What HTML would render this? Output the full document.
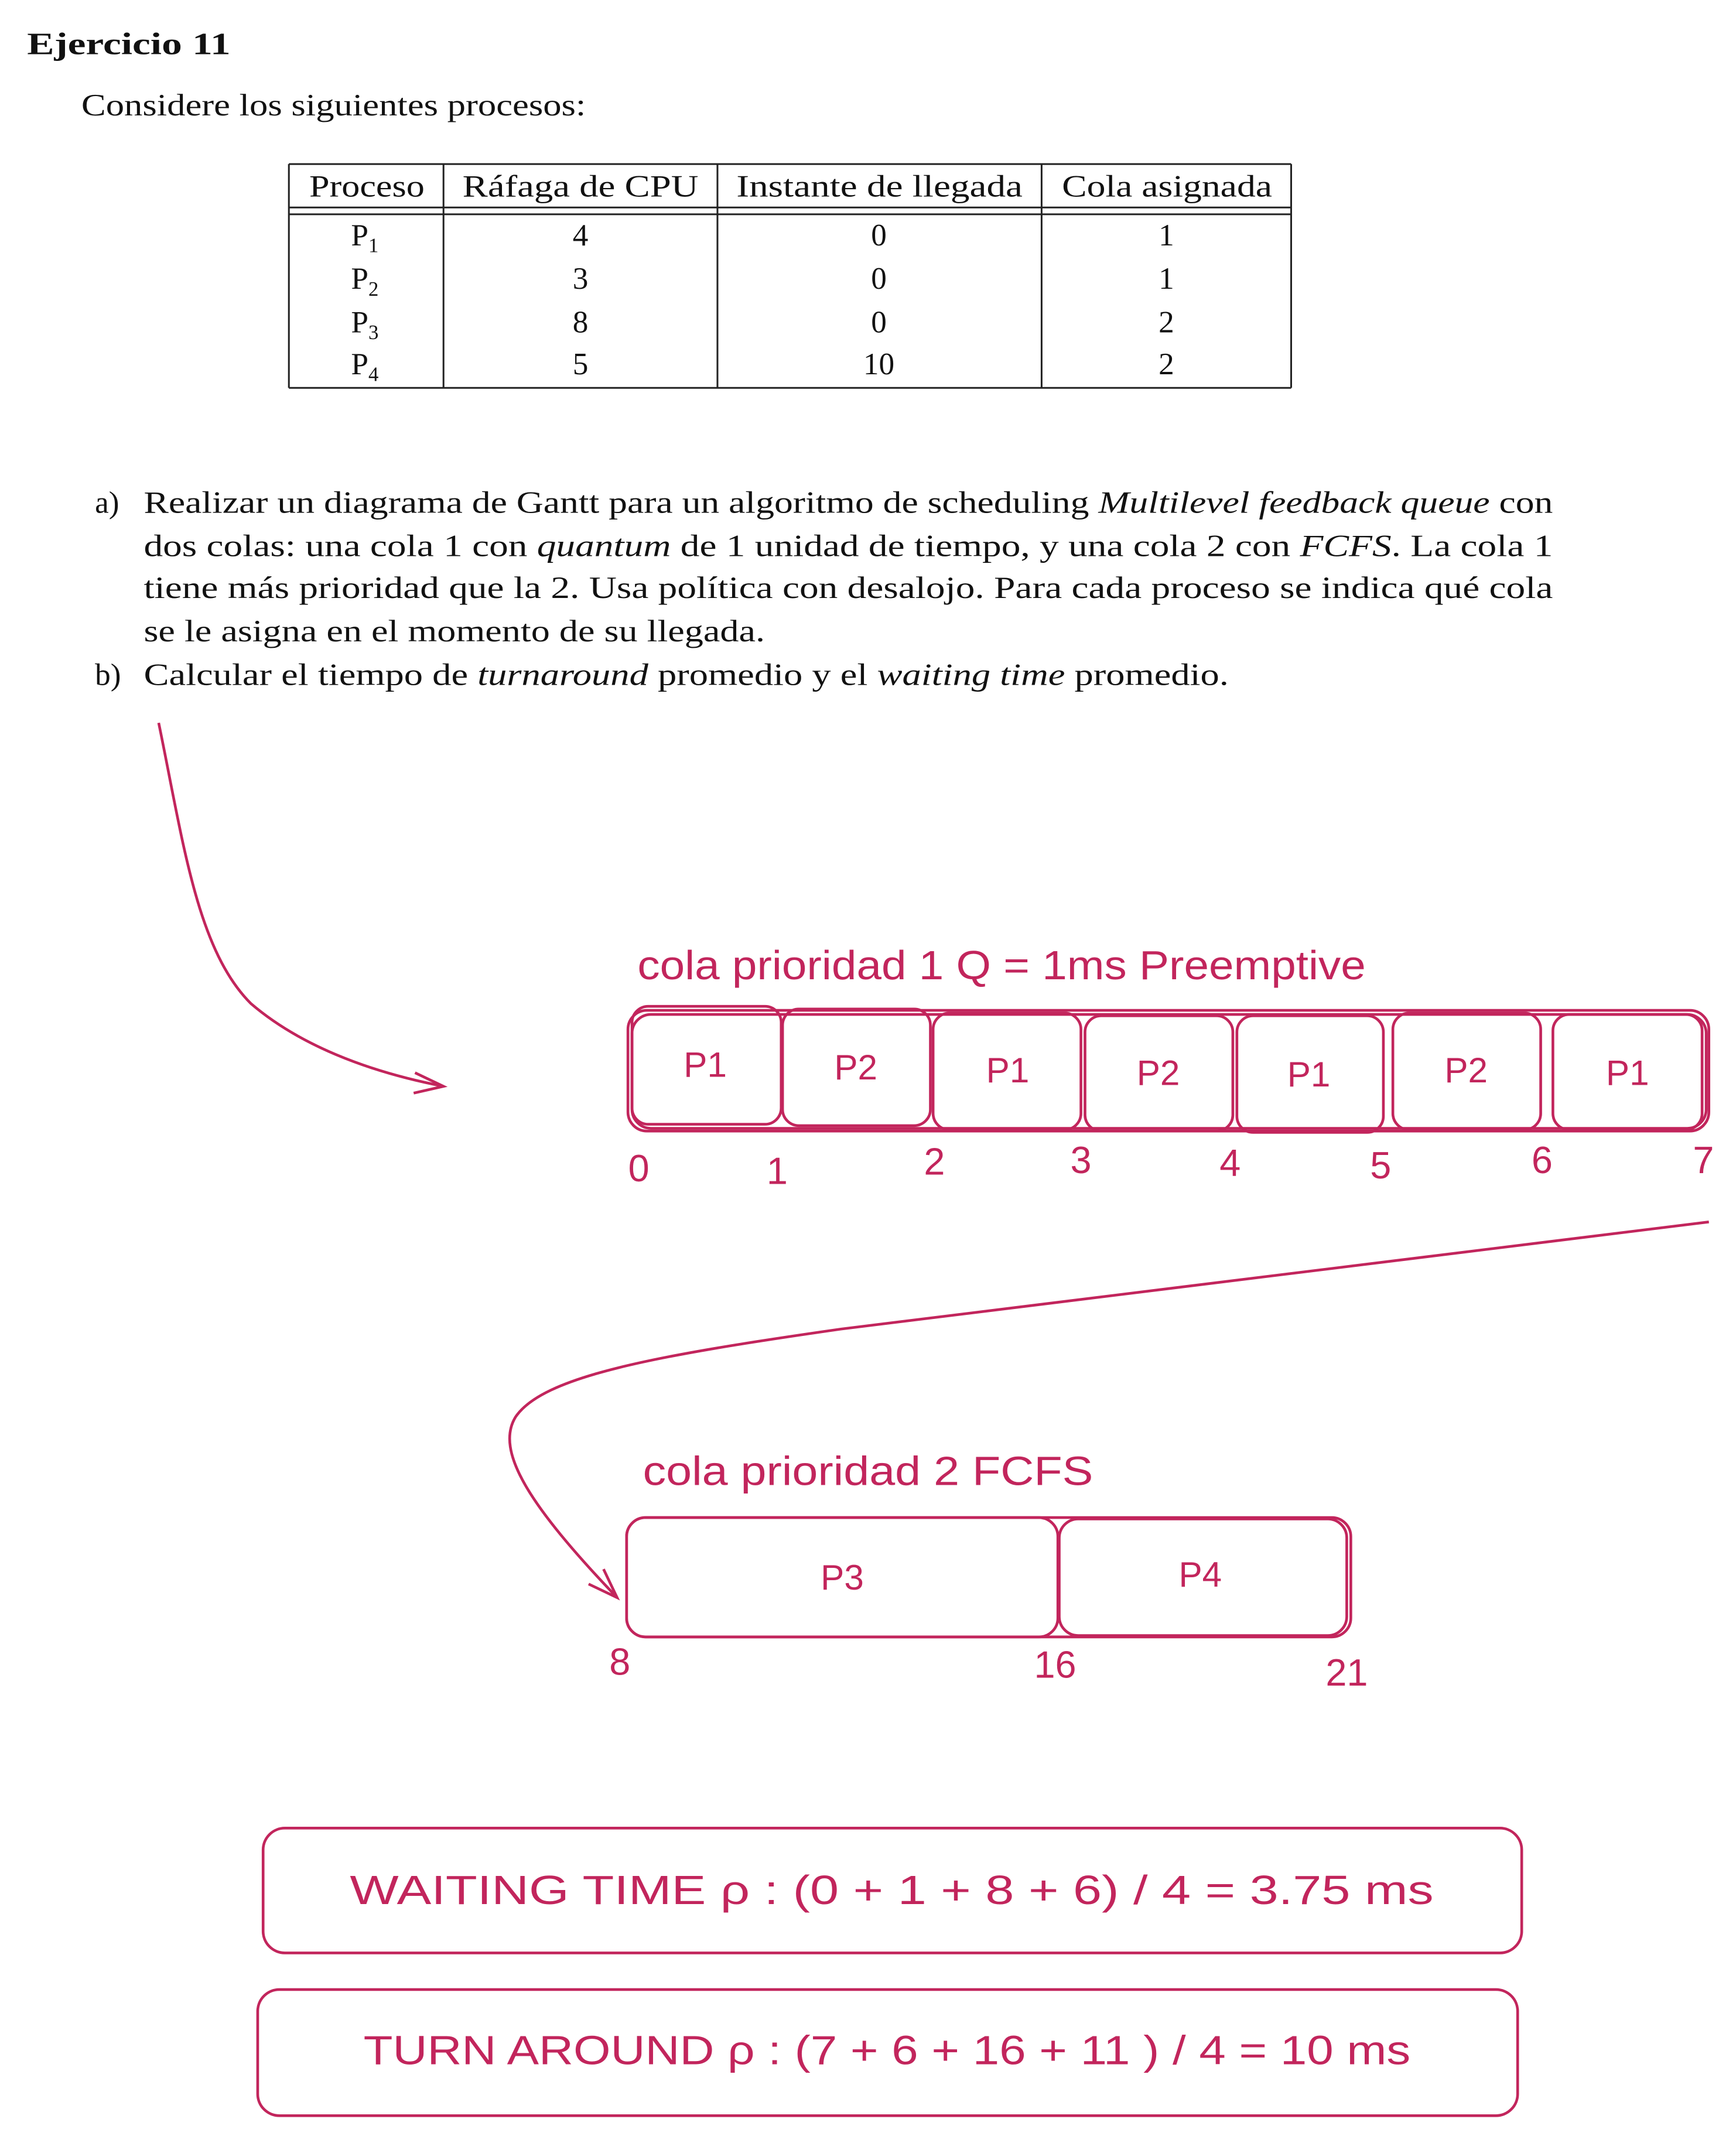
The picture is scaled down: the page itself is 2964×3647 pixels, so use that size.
<!DOCTYPE html>
<html><head><meta charset="utf-8">
<style>
html,body{margin:0;padding:0;background:#fff;}
svg{display:block;}
.s{font-family:"Liberation Serif",serif;fill:#111;}
.h{font-family:"Liberation Sans Narrow","Liberation Sans",sans-serif;fill:#c2255c;}
.r{fill:none;stroke:#c2255c;stroke-width:2;}
</style></head><body>
<svg width="2964" height="3647" viewBox="0 0 1280 1575" preserveAspectRatio="none" xmlns="http://www.w3.org/2000/svg">
<rect width="1280" height="1575" fill="#fff"/>
<text class="s" x="20" y="40" font-size="23" font-weight="bold" textLength="150" lengthAdjust="spacingAndGlyphs">Ejercicio 11</text>
<text class="s" x="60" y="85" font-size="23" textLength="372" lengthAdjust="spacingAndGlyphs">Considere los siguientes procesos:</text>

<!-- table -->
<g stroke="#222" stroke-width="1.3" fill="none">
<line x1="213" y1="121" x2="952" y2="121"/>
<line x1="213" y1="153" x2="952" y2="153"/>
<line x1="213" y1="158" x2="952" y2="158"/>
<line x1="213" y1="286" x2="952" y2="286"/>
<line x1="213" y1="121" x2="213" y2="286"/>
<line x1="327" y1="121" x2="327" y2="286"/>
<line x1="529" y1="121" x2="529" y2="286"/>
<line x1="768" y1="121" x2="768" y2="286"/>
<line x1="952" y1="121" x2="952" y2="286"/>
</g>
<g class="s" font-size="23">
<text x="228" y="145" textLength="85" lengthAdjust="spacingAndGlyphs">Proceso</text>
<text x="341" y="145" textLength="174" lengthAdjust="spacingAndGlyphs">Ráfaga de CPU</text>
<text x="543" y="145" textLength="211" lengthAdjust="spacingAndGlyphs">Instante de llegada</text>
<text x="783" y="145" textLength="155" lengthAdjust="spacingAndGlyphs">Cola asignada</text>
</g>
<g class="s" font-size="23" text-anchor="middle">
<text x="269" y="181">P<tspan font-size="15" dy="5">1</tspan></text>
<text x="269" y="213">P<tspan font-size="15" dy="5">2</tspan></text>
<text x="269" y="245">P<tspan font-size="15" dy="5">3</tspan></text>
<text x="269" y="276">P<tspan font-size="15" dy="5">4</tspan></text>
<text x="428" y="181">4</text><text x="428" y="213">3</text><text x="428" y="245">8</text><text x="428" y="276">5</text>
<text x="648" y="181">0</text><text x="648" y="213">0</text><text x="648" y="245">0</text><text x="648" y="276">10</text>
<text x="860" y="181">1</text><text x="860" y="213">1</text><text x="860" y="245">2</text><text x="860" y="276">2</text>
</g>

<g class="s" font-size="23">
<text x="70" y="378">a)</text>
<text x="106" y="378" textLength="1039" lengthAdjust="spacingAndGlyphs">Realizar un diagrama de Gantt para un algoritmo de scheduling <tspan font-style="italic">Multilevel feedback queue</tspan> con</text>
<text x="106" y="410" textLength="1039" lengthAdjust="spacingAndGlyphs">dos colas: una cola 1 con <tspan font-style="italic">quantum</tspan> de 1 unidad de tiempo, y una cola 2 con <tspan font-style="italic">FCFS</tspan>. La cola 1</text>
<text x="106" y="441" textLength="1039" lengthAdjust="spacingAndGlyphs">tiene más prioridad que la 2. Usa política con desalojo. Para cada proceso se indica qué cola</text>
<text x="106" y="473" textLength="458" lengthAdjust="spacingAndGlyphs">se le asigna en el momento de su llegada.</text>
<text x="70" y="505">b)</text>
<text x="106" y="505" textLength="800" lengthAdjust="spacingAndGlyphs">Calcular el tiempo de <tspan font-style="italic">turnaround</tspan> promedio y el <tspan font-style="italic">waiting time</tspan> promedio.</text>
</g>

<!-- arrow 1 -->
<path class="r" d="M117 533 C135 620 145 700 185 740 C220 770 270 790 327 801"/>
<path class="r" d="M306 791 L327 801 L305 806"/>

<text class="h" x="470" y="722" font-size="30" textLength="537" lengthAdjust="spacingAndGlyphs">cola prioridad 1 Q = 1ms Preemptive</text>

<!-- gantt 1 -->
<rect class="r" x="463" y="745" width="797" height="89" rx="14"/>
<rect class="r" x="466" y="748" width="792" height="84" rx="14"/>
<rect class="r" x="466" y="742" width="110" height="87" rx="12"/>
<rect class="r" x="577" y="744" width="109" height="86" rx="12"/>
<rect class="r" x="688" y="747" width="109" height="86" rx="12"/>
<rect class="r" x="800" y="749" width="109" height="85" rx="12"/>
<rect class="r" x="912" y="749" width="108" height="86" rx="12"/>
<rect class="r" x="1027" y="747" width="109" height="86" rx="12"/>
<rect class="r" x="1145" y="748" width="110" height="85" rx="12"/>
<g class="h" font-size="26" text-anchor="middle">
<text x="520" y="794">P1</text><text x="631" y="796">P2</text><text x="743" y="798">P1</text>
<text x="854" y="800">P2</text><text x="965" y="801">P1</text><text x="1081" y="798">P2</text><text x="1200" y="800">P1</text>
</g>
<g class="h" font-size="28" text-anchor="middle">
<text x="471" y="871">0</text><text x="573" y="873">1</text><text x="689" y="866">2</text><text x="797" y="865">3</text>
<text x="907" y="867">4</text><text x="1018" y="869">5</text><text x="1137" y="865">6</text><text x="1256" y="865">7</text>
</g>

<!-- arrow 2 -->
<path class="r" d="M1260 901 L620 980 C480 1000 400 1015 380 1045 C365 1070 390 1110 455 1178"/>
<path class="r" d="M445 1157 L455 1178 L434 1168"/>

<text class="h" x="474" y="1095" font-size="30" textLength="332" lengthAdjust="spacingAndGlyphs">cola prioridad 2 FCFS</text>
<rect class="r" x="462" y="1119" width="534" height="88" rx="14"/>
<rect class="r" x="462" y="1119" width="318" height="88" rx="14"/>
<rect class="r" x="781" y="1120" width="212" height="86" rx="14"/>
<text class="h" x="621" y="1172" font-size="26" text-anchor="middle">P3</text>
<text class="h" x="885" y="1170" font-size="26" text-anchor="middle">P4</text>
<g class="h" font-size="28" text-anchor="middle">
<text x="457" y="1235">8</text><text x="778" y="1237">16</text><text x="993" y="1243">21</text>
</g>

<!-- results -->
<rect class="r" x="194" y="1348" width="928" height="92" rx="16"/>
<text class="h" x="258" y="1404" font-size="30" textLength="799" lengthAdjust="spacingAndGlyphs">WAITING TIME ρ : (0 + 1 + 8 + 6) / 4 = 3.75 ms</text>
<rect class="r" x="190" y="1467" width="929" height="93" rx="16"/>
<text class="h" x="268" y="1522" font-size="30" textLength="772" lengthAdjust="spacingAndGlyphs">TURN AROUND ρ : (7 + 6 + 16 + 11 ) / 4 = 10 ms</text>
</svg>
</body></html>
